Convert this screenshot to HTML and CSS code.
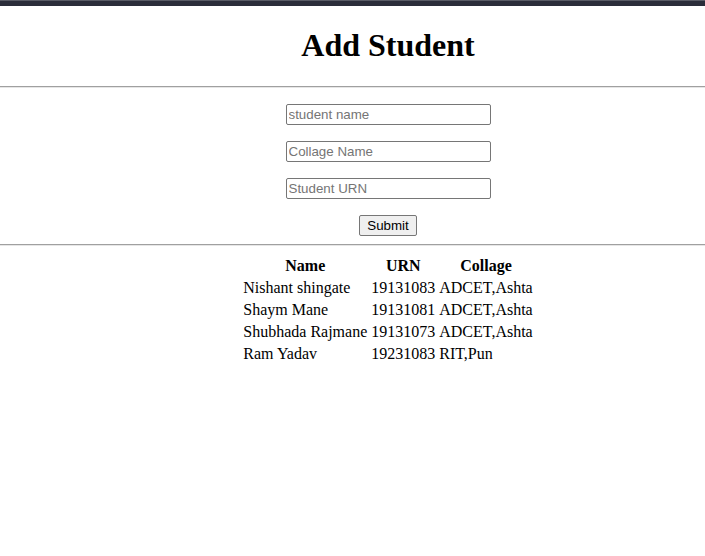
FILE: index.html
```html
<!DOCTYPE html>
<html>
<head>
<meta charset="utf-8">
<title>Add Student</title>
<link rel="stylesheet" href="styles.css">
</head>
<body>
<div class="topbar"></div>
<div class="content">
  <h1 class="title">Add Student</h1>
</div>
<hr class="rule">
<form class="content form">
  <p class="field"><input class="input" type="text" placeholder="student name"></p>
  <p class="field"><input class="input" type="text" placeholder="Collage Name"></p>
  <p class="field"><input class="input" type="text" placeholder="Student URN"></p>
  <div class="actions"><button class="btn" type="button">Submit</button></div>
</form>
<hr class="rule">
<div class="content">
  <table class="students">
    <thead>
      <tr><th>Name</th><th>URN</th><th>Collage</th></tr>
    </thead>
    <tbody>
      <tr><td>Nishant shingate</td><td>19131083</td><td>ADCET,Ashta</td></tr>
      <tr><td>Shaym Mane</td><td>19131081</td><td>ADCET,Ashta</td></tr>
      <tr><td>Shubhada Rajmane</td><td>19131073</td><td>ADCET,Ashta</td></tr>
      <tr><td>Ram Yadav</td><td>19231083</td><td>RIT,Pun</td></tr>
    </tbody>
  </table>
</div>
</body>
</html>
```

FILE: styles.css
```css
html, body {
  margin: 0;
  padding: 0;
  background: #ffffff;
}
body {
  font-family: "Liberation Serif", "Times New Roman", serif;
  font-size: 16px;
  color: #000;
}
.topbar {
  height: 5px;
  background: #2b2d3a;
  border-top: 1px solid #5a5c66;
}
.content {
  padding-left: 71px;
  text-align: center;
}
.title {
  font-size: 32px;
  font-weight: bold;
  margin: 21.44px 0;
}
.rule {
  margin: 8px 0;
  border: none;
  border-top: 1px solid #a0a0a0;
  border-bottom: 1px solid #e6e6e6;
  height: 0;
}
.form {
  margin: 0;
}
.field {
  margin: 16px 0;
}
.input {
  width: 205px;
  height: 21px;
  box-sizing: border-box;
  font-family: "Liberation Sans", Arial, sans-serif;
  font-size: 13.33px;
  padding: 1px 2px;
  border: 1px solid #767676;
  border-radius: 2px;
  vertical-align: top;
}
.input::placeholder {
  color: #757575;
}
.actions {
  margin: 0;
  height: 21px;
}
.btn {
  font-family: "Liberation Sans", Arial, sans-serif;
  font-size: 13.33px;
  width: 58px;
  height: 21px;
  box-sizing: border-box;
  padding: 1px 6px;
  border: 1px solid #767676;
  border-radius: 2px;
  background: #efefef;
  color: #000;
  vertical-align: top;
}
.students {
  margin: 0 auto;
  border-spacing: 2px;
  text-align: left;
}
.students th,
.students td {
  padding: 1px;
}
.students th {
  text-align: center;
  font-weight: bold;
}
```
